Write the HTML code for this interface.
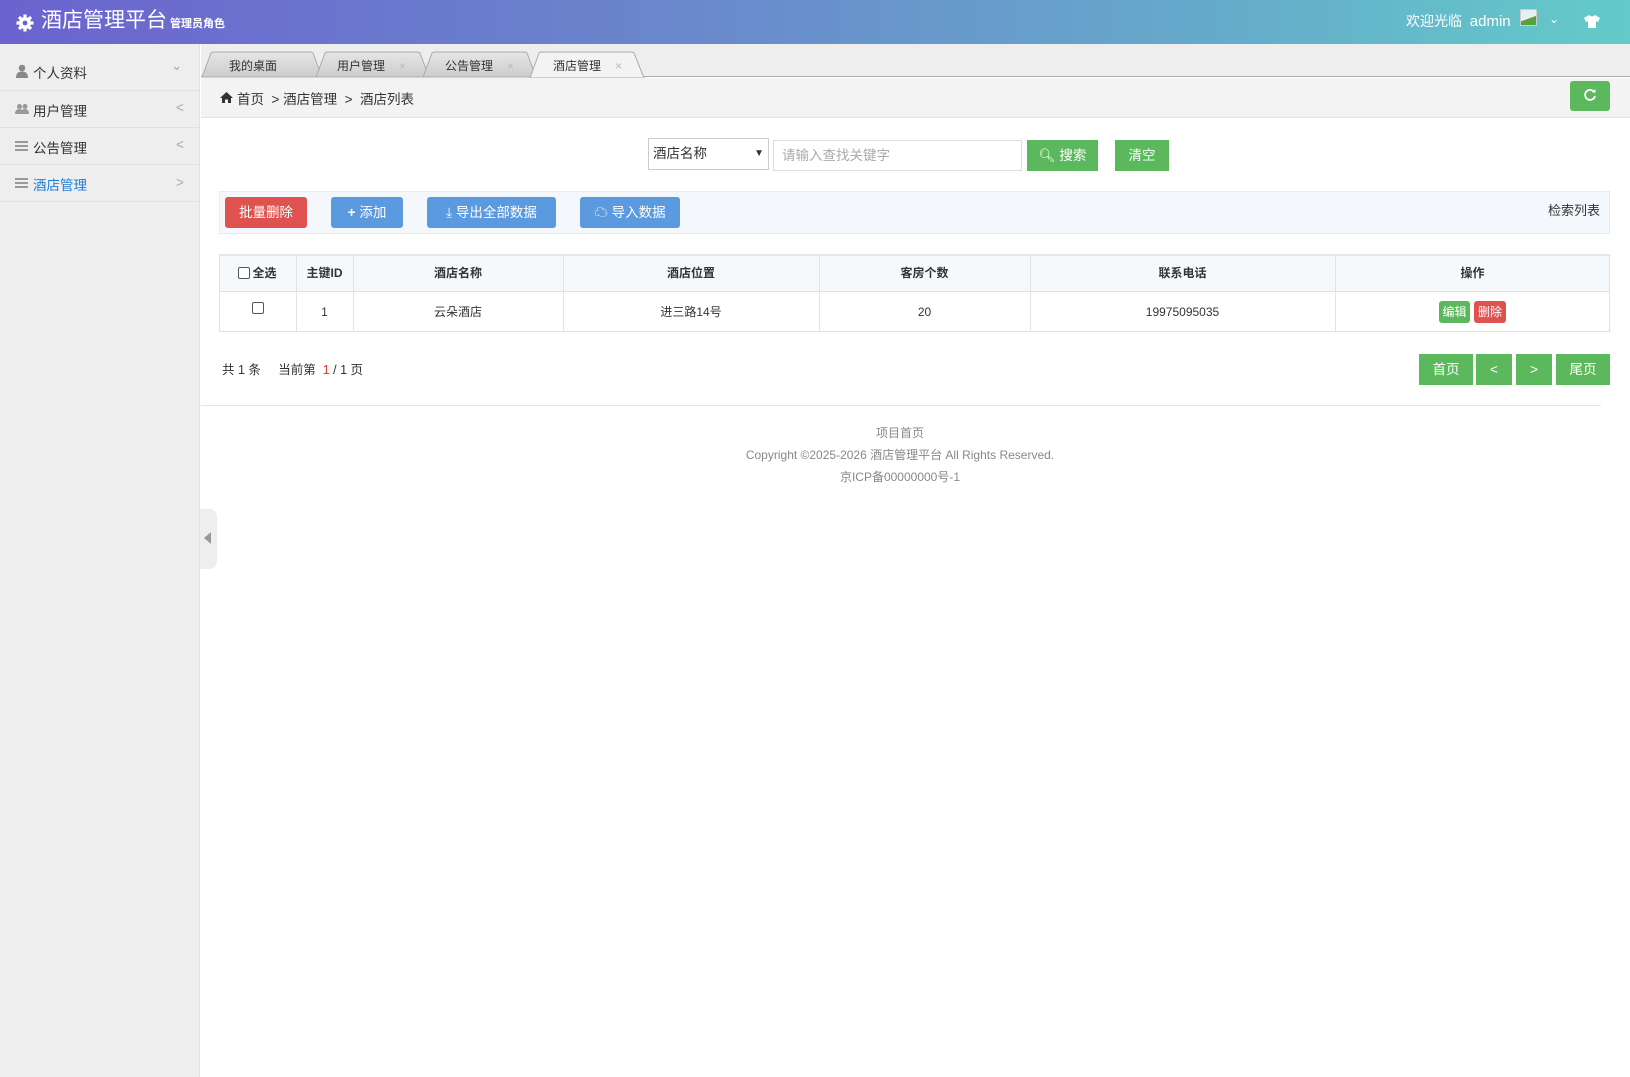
<!DOCTYPE html>
<html><head><meta charset="utf-8">
<style>
*{margin:0;padding:0;box-sizing:border-box}
body{width:1630px;height:1077px;overflow:hidden;background:#fff;font-family:"Liberation Sans","Noto Sans CJK SC",sans-serif;color:#333;font-size:13px;position:relative}
.abs{position:absolute}
.hdr{left:0;top:0;width:1630px;height:44px;background:linear-gradient(90deg,#6b63cf 0%,#6a86cc 40%,#65abcb 75%,#64cbc9 100%)}
.side{left:0;top:44px;width:200px;height:1033px;background:#eeeeee;border-right:1px solid #e2e2e2}
.item{position:absolute;left:0;width:200px;border-bottom:1px solid #e0e0e0;font-size:13.5px;color:#333}
.btn{position:absolute;color:#fff;font-size:13.5px;text-align:center;border-radius:3px}
.th,.td{position:absolute;text-align:center;font-size:12px}
.th{font-weight:bold;top:255px;height:37px;line-height:37px}
.td{top:292px;height:40px;line-height:40px}
.vl{position:absolute;top:255px;width:1px;height:77px;background:#e3e3e3}
</style></head><body>
<div class="abs hdr"></div>
<svg class="abs" style="left:15px;top:13px" width="20" height="20" viewBox="0 0 20 20"><g fill="#fff"><circle cx="10" cy="10" r="6"/><g stroke="#fff" stroke-width="3.2"><line x1="10" y1="1.5" x2="10" y2="18.5"/><line x1="1.5" y1="10" x2="18.5" y2="10"/><line x1="4" y1="4" x2="16" y2="16"/><line x1="16" y1="4" x2="4" y2="16"/></g></g><circle cx="10" cy="10" r="2.4" fill="#6b63cf"/></svg>
<div class="abs" style="left:41px;top:8px;color:#fff;font-size:21px;line-height:26px">酒店管理平台<span style="font-size:11px;font-weight:bold;margin-left:3px">管理员角色</span></div>
<div class="abs" style="left:1406px;top:12px;color:#fff;font-size:14px;line-height:18px">欢迎光临&nbsp;&nbsp;<span style="font-size:15px">admin</span></div>
<div class="abs" style="left:1520px;top:9px;width:17px;height:17px;border:1px solid #ccc;background:linear-gradient(160deg,#e8eef5 55%,#5aa03c 56%)"></div>
<div class="abs" style="left:1549px;top:12px;color:#fff;font-size:12px">&#8964;</div>
<svg class="abs" style="left:1583px;top:14px" width="18" height="15" viewBox="0 0 18 15"><path d="M6 1 L1 4 L3 8 L5 7 L5 14 L13 14 L13 7 L15 8 L17 4 L12 1 Q9 4 6 1Z" fill="#fff"/></svg>

<div class="abs side"></div>
<div class="item" style="top:44px;height:47px">
<svg class="abs" style="left:15px;top:20px" width="14" height="14" viewBox="0 0 14 14"><circle cx="7" cy="4" r="3.3" fill="#888"/><path d="M1 14 Q1 7.5 7 7.5 Q13 7.5 13 14Z" fill="#888"/></svg>
<span class="abs" style="left:33px;top:18px">个人资料</span><span class="abs" style="left:171px;top:14px;color:#aaa">&#8964;</span></div>
<div class="item" style="top:91px;height:37px">
<svg class="abs" style="left:15px;top:12px" width="14" height="12" viewBox="0 0 14 12"><circle cx="4.5" cy="3.5" r="2.5" fill="#999"/><circle cx="10" cy="3.5" r="2.5" fill="#999"/><path d="M0 11 Q0 6 4.5 6 Q9 6 9 11Z M6 11 Q6 6 10 6 Q14 6 14 11Z" fill="#999"/></svg>
<span class="abs" style="left:33px;top:9px">用户管理</span><span class="abs" style="left:176px;top:9px;color:#aaa">&lt;</span></div>
<div class="item" style="top:128px;height:37px">
<div class="abs" style="left:15px;top:13px;width:13px;height:10px;border-top:2px solid #999;border-bottom:2px solid #999"></div><div class="abs" style="left:15px;top:17px;width:13px;height:2px;background:#999"></div>
<span class="abs" style="left:33px;top:9px">公告管理</span><span class="abs" style="left:176px;top:9px;color:#aaa">&lt;</span></div>
<div class="item" style="top:165px;height:37px">
<div class="abs" style="left:15px;top:13px;width:13px;height:10px;border-top:2px solid #999;border-bottom:2px solid #999"></div><div class="abs" style="left:15px;top:17px;width:13px;height:2px;background:#999"></div>
<span class="abs" style="left:33px;top:9px;color:#1e7fd6">酒店管理</span><span class="abs" style="left:176px;top:10px;color:#aaa">&gt;</span></div>

<div class="abs" style="left:201px;top:44px;width:1429px;height:33px;background:#eeeeef;border-bottom:1px solid #aaa"></div>
<svg class="abs" style="left:201px;top:50px" width="460" height="28">
<defs><linearGradient id="g" x1="0" y1="0" x2="0" y2="1"><stop offset="0" stop-color="#e6e6e6"/><stop offset="1" stop-color="#cdcdcd"/></linearGradient></defs>
<path d="M1 27 L10 3 Q11 2 13 2 L109 2 Q111 2 112 3 L121 27Z" fill="url(#g)" stroke="#aaa"/>
<path d="M115 27 L124 3 Q125 2 127 2 L216 2 Q218 2 219 3 L228 27Z" fill="url(#g)" stroke="#aaa"/>
<path d="M222 27 L231 3 Q232 2 234 2 L323 2 Q325 2 326 3 L335 27Z" fill="url(#g)" stroke="#aaa"/>
<path d="M329 28 L338 3 Q339 2 341 2 L430 2 Q432 2 433 3 L443 28Z" fill="#f3f3f3" stroke="#aaa"/>
</svg>
<div class="abs" style="left:229px;top:57px;font-size:12px">我的桌面</div>
<div class="abs" style="left:337px;top:57px;font-size:12px">用户管理<span style="color:#bbb;margin-left:14px">×</span></div>
<div class="abs" style="left:445px;top:57px;font-size:12px">公告管理<span style="color:#bbb;margin-left:14px">×</span></div>
<div class="abs" style="left:553px;top:57px;font-size:12px">酒店管理<span style="color:#bbb;margin-left:14px">×</span></div>

<div class="abs" style="left:201px;top:78px;width:1429px;height:40px;background:#f3f3f3;border-bottom:1px solid #e3e3e3"></div>
<svg class="abs" style="left:220px;top:92px" width="13" height="11" viewBox="0 0 13 11"><path d="M6.5 0 L13 6 L11 6 L11 11 L8 11 L8 7.5 L5 7.5 L5 11 L2 11 L2 6 L0 6Z" fill="#333"/></svg>
<div class="abs" style="left:237px;top:88px;font-size:13.5px">首页 &nbsp;&gt; 酒店管理 &nbsp;&gt; &nbsp;酒店列表</div>
<div class="btn" style="left:1570px;top:81px;width:40px;height:30px;background:#5cb85c;line-height:30px;font-size:16px"><svg width="14" height="14" viewBox="0 0 14 14" style="vertical-align:-2px"><path d="M11.5 4.5 A5 5 0 1 0 12 8" fill="none" stroke="#fff" stroke-width="1.8"/><path d="M9 4.5 L12.5 4.5 L12.5 1Z" fill="#fff"/></svg></div>

<div class="abs" style="left:648px;top:138px;width:121px;height:32px;border:1px solid #ccc;background:#fff;font-size:13.5px;line-height:30px;padding-left:4px">酒店名称<span class="abs" style="right:4px;top:0;font-size:10px">&#9660;</span></div>
<div class="abs" style="left:773px;top:140px;width:249px;height:31px;border:1px solid #ddd;color:#aaa;font-size:13.5px;line-height:29px;padding-left:8px">请输入查找关键字</div>
<div class="btn" style="left:1027px;top:140px;width:71px;height:31px;background:#5cb85c;line-height:31px;border-radius:0">&#x1F50D;&#xFE0E; 搜索</div>
<div class="btn" style="left:1115px;top:140px;width:54px;height:31px;background:#5cb85c;line-height:31px;border-radius:0">清空</div>

<div class="abs" style="left:219px;top:191px;width:1391px;height:43px;background:#f4f8fc;border:1px solid #e4ecf3"></div>
<div class="btn" style="left:225px;top:197px;width:82px;height:31px;background:#de5250;line-height:31px">批量删除</div>
<div class="btn" style="left:331px;top:197px;width:72px;height:31px;background:#5b9ade;line-height:31px"><b>+</b> 添加</div>
<div class="btn" style="left:427px;top:197px;width:129px;height:31px;background:#5b9ade;line-height:31px">&#10515; 导出全部数据</div>
<div class="btn" style="left:580px;top:197px;width:100px;height:31px;background:#5b9ade;line-height:31px">&#9729; 导入数据</div>
<div class="abs" style="left:1548px;top:200px;font-size:13px">检索列表</div>

<div class="abs" style="left:219px;top:254px;width:1391px;height:78px;border:1px solid #dde2e8;border-top:2px solid #e3e8ee"></div>
<div class="abs" style="left:220px;top:256px;width:1389px;height:36px;background:#f5f9fc;border-bottom:1px solid #dde2e8"></div>
<div class="vl" style="left:296px"></div><div class="vl" style="left:353px"></div><div class="vl" style="left:563px"></div><div class="vl" style="left:819px"></div><div class="vl" style="left:1030px"></div><div class="vl" style="left:1335px"></div>
<div class="th" style="left:219px;width:77px"><span style="display:inline-block;width:12px;height:12px;border:1px solid #555;border-radius:2px;vertical-align:-2px;background:#fff;margin-right:2px"></span>全选</div>
<div class="th" style="left:296px;width:57px">主键ID</div>
<div class="th" style="left:353px;width:210px">酒店名称</div>
<div class="th" style="left:563px;width:256px">酒店位置</div>
<div class="th" style="left:819px;width:211px">客房个数</div>
<div class="th" style="left:1030px;width:305px">联系电话</div>
<div class="th" style="left:1335px;width:275px">操作</div>
<div class="abs" style="left:252px;top:302px;width:12px;height:12px;border:1px solid #555;border-radius:2px"></div>
<div class="td" style="left:296px;width:57px">1</div>
<div class="td" style="left:353px;width:210px">云朵酒店</div>
<div class="td" style="left:563px;width:256px">进三路14号</div>
<div class="td" style="left:819px;width:211px">20</div>
<div class="td" style="left:1030px;width:305px">19975095035</div>
<div class="btn" style="left:1439px;top:301px;width:31px;height:22px;background:#5cb85c;font-size:12px;line-height:22px">编辑</div>
<div class="btn" style="left:1474px;top:301px;width:32px;height:22px;background:#de5250;font-size:12px;line-height:22px">删除</div>

<div class="abs" style="left:222px;top:362px;font-size:12.5px;line-height:16px">共 1 条 &nbsp;&nbsp;&nbsp; 当前第 &nbsp;<span style="color:#e33">1</span> / 1 页</div>
<div class="btn" style="left:1419px;top:354px;width:54px;height:31px;background:#5cb85c;line-height:31px;border-radius:0">首页</div>
<div class="btn" style="left:1476px;top:354px;width:36px;height:31px;background:#5cb85c;line-height:31px;border-radius:0">&lt;</div>
<div class="btn" style="left:1516px;top:354px;width:36px;height:31px;background:#5cb85c;line-height:31px;border-radius:0">&gt;</div>
<div class="btn" style="left:1556px;top:354px;width:54px;height:31px;background:#5cb85c;line-height:31px;border-radius:0">尾页</div>

<div class="abs" style="left:201px;top:405px;width:1400px;height:1px;background:#e5e5e5"></div>
<div class="abs" style="left:600px;top:422px;width:600px;text-align:center;color:#888;font-size:12px;line-height:22px">项目首页<br>Copyright ©2025-2026 酒店管理平台 All Rights Reserved.<br>京ICP备00000000号-1</div>

<div class="abs" style="left:200px;top:509px;width:17px;height:60px;background:#eee;border-radius:0 8px 8px 0"></div>
<div class="abs" style="left:204px;top:532px;width:0;height:0;border-top:6px solid transparent;border-bottom:6px solid transparent;border-right:7px solid #999"></div>
</body></html>
